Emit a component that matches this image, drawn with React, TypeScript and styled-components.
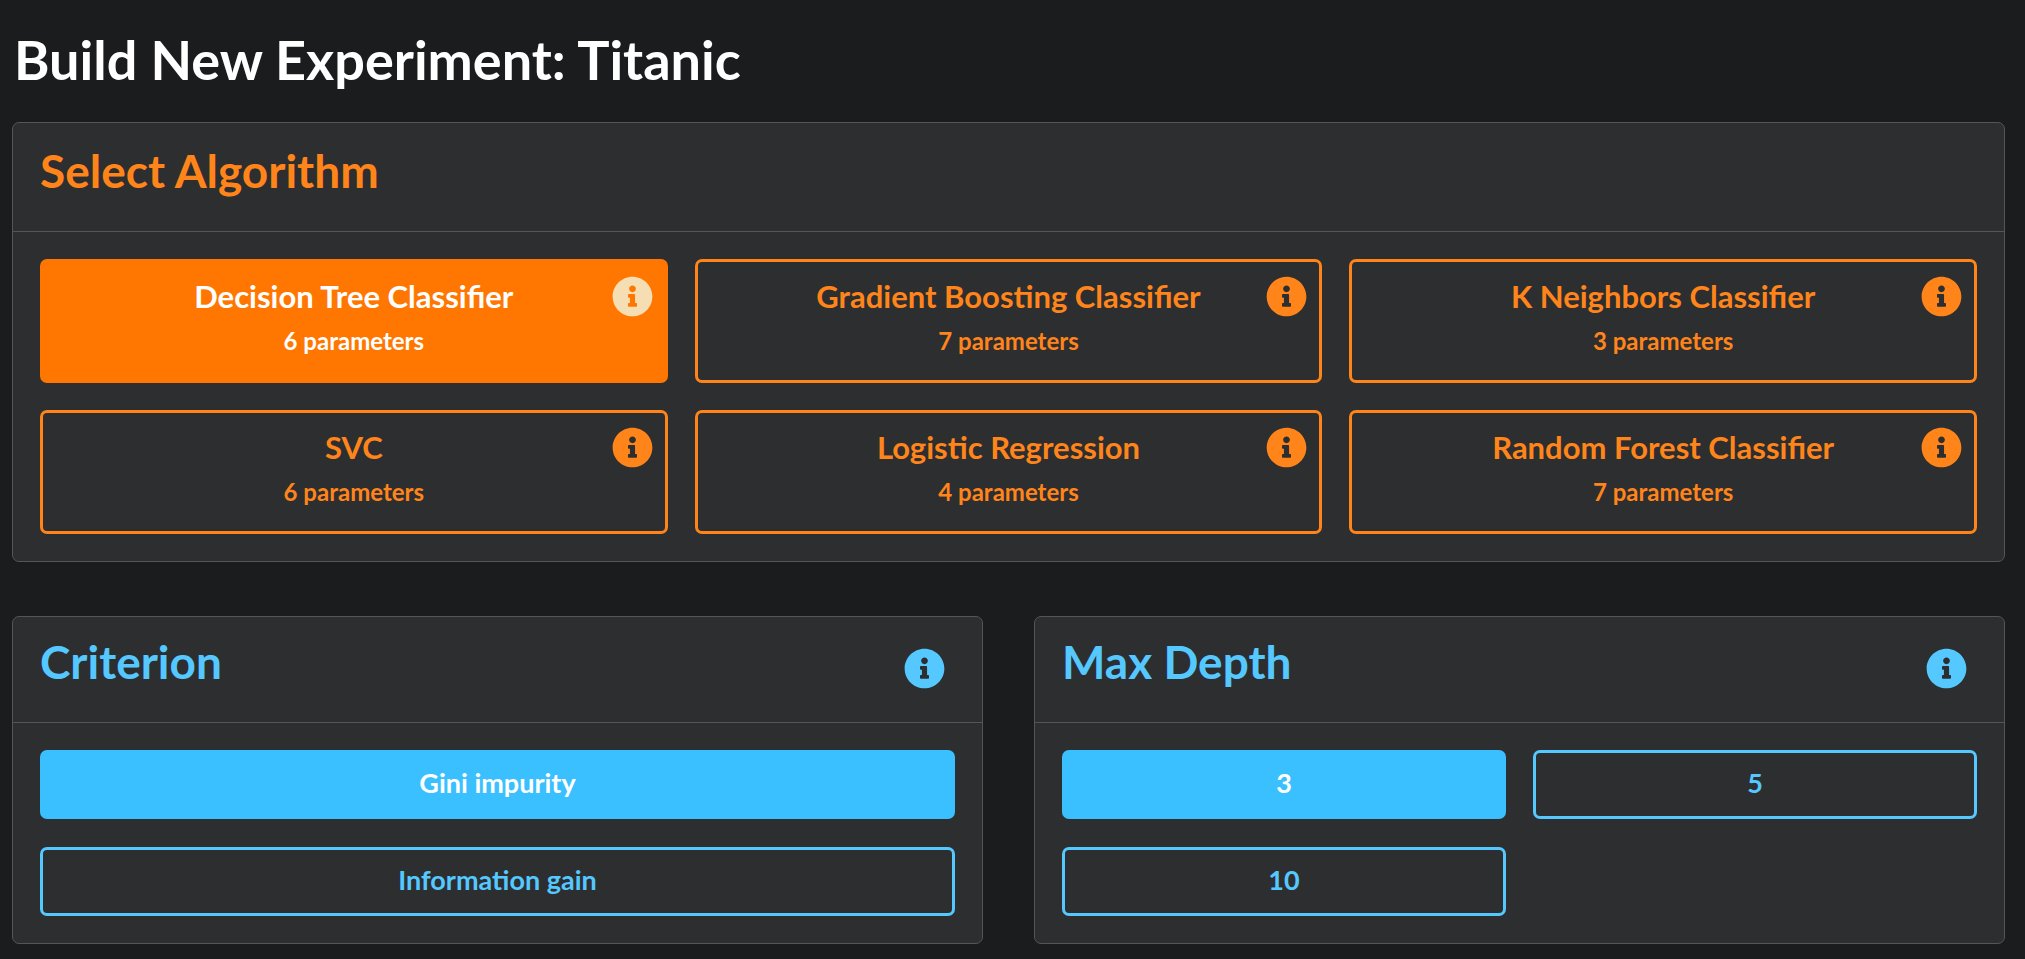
import React, { useState } from "react";
import styled, { createGlobalStyle } from "styled-components";
import { FaInfoCircle } from "react-icons/fa";

const ORANGE = { base: "#ff851b", active: "#ff7701" };
const BLUE = { base: "#54c8ff", active: "#3ac0ff" };

const GlobalStyle = createGlobalStyle`
  *, *::before, *::after { box-sizing: border-box; }
  body {
    margin: 0;
    background: #1b1c1d;
    color: #ffffff;
    font-family: Lato, "Open Sans", sans-serif;
    font-weight: 700;
  }
  button { font: inherit; cursor: pointer; }
`;

const Page = styled.main`
  padding: 25px 20px 14px 12px;
`;

const PageTitle = styled.h1`
  margin: 0 0 27px;
  padding-left: 2px;
  font-size: 54px;
  line-height: 70px;
`;

const Card = styled.section`
  background: #2d2e30;
  border: 1px solid #555555;
  border-radius: 7px;
`;

const CardHeader = styled.header<{ $tall?: boolean; $color: string }>`
  display: flex;
  justify-content: space-between;
  align-items: flex-start;
  padding: ${({ $tall }) => ($tall ? "21px 27px 33px" : "18px 27px 33px")};
  border-bottom: 1px solid #555555;
  color: ${({ $color }) => $color};
`;

const CardTitle = styled.h2`
  margin: 0;
  font-size: 46px;
  line-height: 54px;
`;

const Choices = styled.div<{ $columns: number; $rowGap: number }>`
  display: grid;
  grid-template-columns: repeat(${({ $columns }) => $columns}, minmax(0, 1fr));
  column-gap: 27px;
  row-gap: ${({ $rowGap }) => $rowGap}px;
  padding: 27px;
`;

const ParameterRow = styled.div`
  display: grid;
  grid-template-columns: repeat(2, minmax(0, 1fr));
  gap: 51px;
  margin-top: 54px;
`;

const AlgorithmItem = styled.div`
  position: relative;
  display: grid;
`;

const ChoiceButton = styled.button<{ $selected: boolean; $base: string; $active: string }>`
  border: 3px solid ${({ $selected, $base, $active }) => ($selected ? $active : $base)};
  border-radius: 7px;
  background: ${({ $selected, $active }) => ($selected ? $active : "transparent")};
  color: ${({ $selected, $base }) => ($selected ? "#ffffff" : $base)};
  text-align: center;
`;

const AlgorithmButton = styled(ChoiceButton)`
  display: flex;
  flex-direction: column;
  align-items: center;
  gap: 12px;
  padding: 16px 60px 24px;
`;

const AlgorithmName = styled.span`
  font-size: 31px;
  line-height: 36px;
`;

const ParameterCount = styled.span`
  font-size: 24px;
  line-height: 30px;
`;

const OptionButton = styled(ChoiceButton)`
  padding: 14px 40px 17px;
  font-size: 27px;
  line-height: 32px;
`;

const InfoButton = styled.button<{ $color: string }>`
  display: flex;
  padding: 0;
  border: 0;
  background: none;
  color: ${({ $color }) => $color};
  font-size: 41px;
`;

const CornerInfoButton = styled(InfoButton)`
  position: absolute;
  top: 17px;
  right: 15px;
`;

const HeaderInfoButton = styled(InfoButton)`
  margin: 13px 10px 0 0;
`;

const algorithms = [
  { name: "Decision Tree Classifier", parameters: 6 },
  { name: "Gradient Boosting Classifier", parameters: 7 },
  { name: "K Neighbors Classifier", parameters: 3 },
  { name: "SVC", parameters: 6 },
  { name: "Logistic Regression", parameters: 4 },
  { name: "Random Forest Classifier", parameters: 7 },
];

interface ParameterCardProps {
  title: string;
  options: string[];
  columns: number;
}

function ParameterCard({ title, options, columns }: ParameterCardProps) {
  const [selected, setSelected] = useState(options[0]);
  return (
    <Card>
      <CardHeader $color={BLUE.base}>
        <CardTitle>{title}</CardTitle>
        <HeaderInfoButton $color={BLUE.base} aria-label={`About ${title}`}>
          <FaInfoCircle />
        </HeaderInfoButton>
      </CardHeader>
      <Choices $columns={columns} $rowGap={28}>
        {options.map((option) => (
          <OptionButton
            key={option}
            $base={BLUE.base}
            $active={BLUE.active}
            $selected={option === selected}
            aria-pressed={option === selected}
            onClick={() => setSelected(option)}
          >
            {option}
          </OptionButton>
        ))}
      </Choices>
    </Card>
  );
}

export default function App() {
  const [algorithm, setAlgorithm] = useState(algorithms[0].name);
  return (
    <>
      <GlobalStyle />
      <Page>
        <PageTitle>Build New Experiment: Titanic</PageTitle>
        <Card>
          <CardHeader $tall $color={ORANGE.base}>
            <CardTitle>Select Algorithm</CardTitle>
          </CardHeader>
          <Choices $columns={3} $rowGap={27}>
            {algorithms.map(({ name, parameters }) => {
              const selected = name === algorithm;
              return (
                <AlgorithmItem key={name}>
                  <AlgorithmButton
                    $base={ORANGE.base}
                    $active={ORANGE.active}
                    $selected={selected}
                    aria-pressed={selected}
                    onClick={() => setAlgorithm(name)}
                  >
                    <AlgorithmName>{name}</AlgorithmName>
                    <ParameterCount>{parameters} parameters</ParameterCount>
                  </AlgorithmButton>
                  <CornerInfoButton
                    $color={selected ? "#f5deb3" : ORANGE.base}
                    aria-label={`About ${name}`}
                  >
                    <FaInfoCircle />
                  </CornerInfoButton>
                </AlgorithmItem>
              );
            })}
          </Choices>
        </Card>
        <ParameterRow>
          <ParameterCard title="Criterion" options={["Gini impurity", "Information gain"]} columns={1} />
          <ParameterCard title="Max Depth" options={["3", "5", "10"]} columns={2} />
        </ParameterRow>
      </Page>
    </>
  );
}
